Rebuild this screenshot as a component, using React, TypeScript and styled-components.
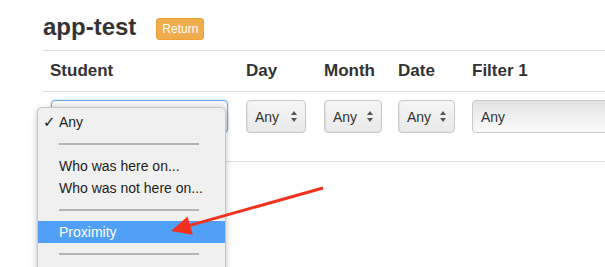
import { createGlobalStyle } from "styled-components";
import styled from "styled-components";

const Global = createGlobalStyle`
body{
  margin:0;
  background:#fff;
  font-family:"Liberation Sans", Arial, sans-serif;
  color:#333;
  overflow:hidden;
}
`;

const Page = styled.div`
  position: relative;
  width: 605px;
  height: 267px;
  overflow: hidden;
  padding-left: 43px;
  box-sizing: border-box;
`;

const Header = styled.div`
  display: flex;
  align-items: center;
  gap: 20px;
  height: 50px;
  padding-top: 3px;
  box-sizing: border-box;
`;

const Title = styled.h1`
  margin: 0;
  font-size: 24px;
  line-height: 26px;
  font-weight: bold;
  color: #333;
`;

const ReturnButton = styled.button`
  margin-top: 5px;
  height: 22px;
  padding: 0 5px;
  background: #f0ad4e;
  border: 1px solid #eea236;
  border-radius: 3px;
  color: #fff;
  font-family: inherit;
  font-size: 12px;
`;

const Table = styled.div`
  width: 700px;
  display: grid;
  grid-template-columns: 196px 78px 74px 74px 1fr;
  border-top: 1px solid #ddd;
`;

const HeadCell = styled.div`
  height: 40px;
  display: flex;
  align-items: center;
  padding-left: 7px;
  border-bottom: 1px solid #ddd;
  font-size: 17px;
  font-weight: bold;
  color: #333;
`;

const Cell = styled.div`
  height: 70px;
  padding: 8px 0 0 7px;
  box-sizing: border-box;
  border-bottom: 1px solid #ddd;
`;

const Select = styled.div<{ $w: number; $focus?: boolean }>`
  width: ${(p) => p.$w}px;
  height: 33px;
  box-sizing: border-box;
  margin-left: ${(p) => (p.$focus ? 1 : 0)}px;
  border: 1px solid ${(p) => (p.$focus ? "#6aa8e6" : "#c9c9c9")};
  box-shadow: ${(p) =>
    p.$focus ? "0 0 2px #8fc0f0" : "inset 1px 0 1px rgba(0,0,0,0.06)"};
  border-radius: 4px;
  background: linear-gradient(#f6f6f6, #e9e9e9);
  display: flex;
  align-items: center;
  justify-content: space-between;
  padding: 0 8px;
  font-size: 14px;
  color: #333;
`;

const Input = styled.div`
  width: 300px;
  height: 33px;
  box-sizing: border-box;
  border: 1px solid #c9c9c9;
  border-radius: 4px;
  background: linear-gradient(#e3e3e3, #fbfbfb);
  display: flex;
  align-items: center;
  padding: 0 8px;
  font-size: 14px;
  color: #333;
`;

const Menu = styled.div`
  position: absolute;
  left: 37px;
  top: 107px;
  width: 189px;
  height: 200px;
  box-sizing: border-box;
  padding-top: 3px;
  background: #f0f0f0;
  border: 1px solid #c6c6c6;
  border-radius: 5px 5px 0 0;
  box-shadow: 0 2px 6px rgba(0, 0, 0, 0.25);
  font-size: 14px;
  color: #222;
`;

const Item = styled.div<{ $active?: boolean }>`
  position: relative;
  height: 22px;
  line-height: 22px;
  padding-left: 21px;
  background: ${(p) => (p.$active ? "#50a0f8" : "transparent")};
  color: ${(p) => (p.$active ? "#fff" : "#222")};
`;

const Check = styled.span`
  position: absolute;
  left: 5px;
  top: 0;
  font-family: "DejaVu Sans", sans-serif;
  font-size: 15px;
  font-weight: bold;
`;

const Separator = styled.div`
  height: 22px;
  display: flex;
  align-items: center;
  padding: 0 26px 0 21px;
  &::after {
    content: "";
    flex: 1;
    height: 1.5px;
    background: #b4b4b4;
  }
`;

const Arrow = styled.svg`
  position: absolute;
  left: 0;
  top: 0;
`;

function Updown() {
  return (
    <svg width="6" height="11" viewBox="0 0 6 11">
      <path d="M3 0 L6 4 L0 4 Z M0 7 L6 7 L3 11 Z" fill="#555" />
    </svg>
  );
}

export default function App() {
  return (
    <Page>
      <Global />
      <Header>
        <Title>app-test</Title>
        <ReturnButton>Return</ReturnButton>
      </Header>
      <Table>
        <HeadCell>Student</HeadCell>
        <HeadCell>Day</HeadCell>
        <HeadCell>Month</HeadCell>
        <HeadCell>Date</HeadCell>
        <HeadCell>Filter 1</HeadCell>
        <Cell>
          <Select $w={177} $focus />
        </Cell>
        <Cell>
          <Select $w={60}>
            Any <Updown />
          </Select>
        </Cell>
        <Cell>
          <Select $w={58}>
            Any <Updown />
          </Select>
        </Cell>
        <Cell>
          <Select $w={57}>
            Any <Updown />
          </Select>
        </Cell>
        <Cell>
          <Input>Any</Input>
        </Cell>
      </Table>
      <Menu>
        <Item>
          <Check>✓</Check>Any
        </Item>
        <Separator />
        <Item>Who was here on...</Item>
        <Item>Who was not here on...</Item>
        <Separator />
        <Item $active>Proximity</Item>
        <Separator />
      </Menu>
      <Arrow width="605" height="267" viewBox="0 0 605 267">
        <line x1="323" y1="188" x2="189" y2="225.6" stroke="#f2311f" strokeWidth="3" />
        <polygon points="171,231 187.6,216.5 192.8,234.7" fill="#f2311f" />
      </Arrow>
    </Page>
  );
}
